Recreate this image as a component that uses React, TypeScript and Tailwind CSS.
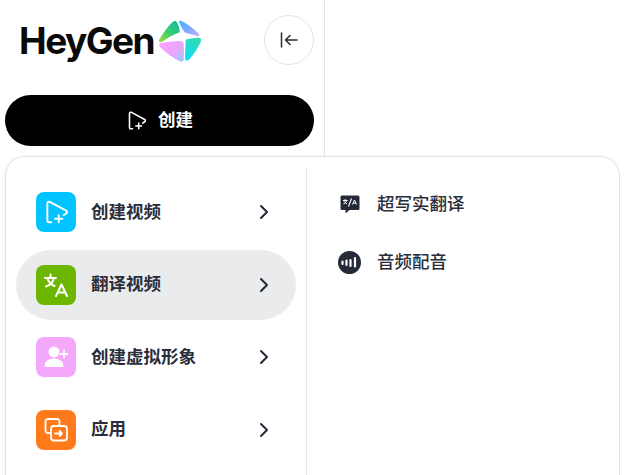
import type { ReactNode } from 'react';
import { ChevronRight } from 'lucide-react';

const cjk = "font-['Inter','Noto_Sans_CJK_SC',sans-serif]";

function LogoMark() {
  return (
    <svg width="44" height="42" viewBox="24 27 132 126" fill="none">
      <defs>
        <linearGradient id="g1" x1="35" y1="95" x2="85" y2="35" gradientUnits="userSpaceOnUse">
          <stop stopColor="#9bd84a" />
          <stop offset="0.5" stopColor="#35cf72" />
          <stop offset="1" stopColor="#12b9a8" />
        </linearGradient>
        <linearGradient id="g2" x1="90" y1="30" x2="148" y2="75" gradientUnits="userSpaceOnUse">
          <stop stopColor="#3db4ff" />
          <stop offset="1" stopColor="#c9a2ff" />
        </linearGradient>
        <linearGradient id="g3" x1="45" y1="100" x2="100" y2="150" gradientUnits="userSpaceOnUse">
          <stop stopColor="#f7a3ff" />
          <stop offset="0.55" stopColor="#e5a8fb" />
          <stop offset="1" stopColor="#8fc8ff" />
        </linearGradient>
        <linearGradient id="g4" x1="135" y1="80" x2="110" y2="150" gradientUnits="userSpaceOnUse">
          <stop stopColor="#2fdcb0" />
          <stop offset="1" stopColor="#0fdcff" />
        </linearGradient>
      </defs>
      <path d="M27 87C38 68 52 47 69 32c4-3 9-3 11 1 5 8 8 18 9 26 0 3-1 5-4 6-16 6-32 15-48 27-6 4-13 0-10-5Z" fill="url(#g1)" />
      <path d="M88 30c1-2 3-2 5-1 20 9 38 23 53 39 4 4 3 8-2 7-12-3-24-6-35-9-4-1-6-3-8-6-5-8-10-17-13-26-1-2-1-3 0-4Z" fill="url(#g2)" />
      <path d="M33 96c18-3 38-6 58-6 7 0 10 3 10 9 1 16 1 31 0 46 0 7-6 9-12 6-20-10-39-24-55-39-7-6-8-14-1-16Z" fill="url(#g3)" />
      <path d="M107 92c0-5 2-7 7-8 11-2 22-4 32-4 7 0 9 7 6 13-9 19-21 37-34 52-5 6-13 5-13-3 0-16 1-33 2-50Z" fill="url(#g4)" />
    </svg>
  );
}

function PlayPlus({ size, color }: { size: number; color: string }) {
  return (
    <svg width={size} height={size} viewBox="0 0 24 24" fill="none" stroke={color} strokeWidth="1.8" strokeLinecap="round" strokeLinejoin="round">
      <path d="M7.500 21.500H5.600C4.700 21.500 4 20.800 4 19.900V4C4 2.800 5.300 2.100 6.300 2.700L21.400 10.800c1 .6 1 2 0 2.600L19 15" />
      <path d="M14.500 15v6.500M11.200 18.200h6.600" />
    </svg>
  );
}

function TranslateIcon() {
  return (
    <svg width="26" height="26" viewBox="0 0 26 26" fill="none" stroke="#fff" strokeWidth="2" strokeLinecap="round" strokeLinejoin="round">
      <path d="M2 6h11M7.500 2.500V6M11 6c-.8 4-3.600 7-8 8.500M4.500 6.500c1 3.500 3.500 6 7 7.500" />
      <path d="M13 24 18.500 12.500 24 24M14.800 20.500h7.400" />
    </svg>
  );
}

function PersonPlus() {
  return (
    <svg width="26" height="26" viewBox="0 0 26 26" fill="#fff">
      <circle cx="11" cy="8" r="5.500" />
      <path d="M1.500 22c0-4.500 4-7.500 9.500-7.500s9.500 3 9.500 7.500c0 .6-.4 1-1 1h-17c-.6 0-1-.4-1-1Z" />
      <path d="M21 6.500v7M17.500 10h7" stroke="#fff" strokeWidth="1.800" strokeLinecap="round" />
    </svg>
  );
}

function AppsIcon() {
  return (
    <svg width="24" height="24" viewBox="0 0 24 24" fill="none" stroke="#fff" strokeWidth="1.800" strokeLinecap="round" strokeLinejoin="round">
      <path d="M6 15H4a2.500 2.500 0 0 1-2.500-2.500V3.500A2.500 2.500 0 0 1 4 1h9a2.500 2.500 0 0 1 2.500 2.500V8" />
      <rect x="7" y="8" width="16" height="14.500" rx="3" />
      <path d="M11 15.500h7M15.500 13 18 15.500 15.500 18" />
    </svg>
  );
}

function BubbleIcon() {
  return (
    <svg width="20" height="19" viewBox="0 0 20 19" fill="#252a38">
      <path d="M2 .5h16A1.500 1.500 0 0 1 19.500 2v11.500A1.500 1.500 0 0 1 18 15H9.500L5.500 18.500V15H2A1.500 1.500 0 0 1 .5 13.500V2A1.500 1.500 0 0 1 2 .5Z" />
      <path d="M8.500 11.500 11.500 3.500" stroke="#fff" strokeWidth="1.100" />
      <path d="M3 5.500h4.500M5.200 4v1.500M6.600 5.800c-.4 1.500-1.400 2.400-3.100 3M4 6.200c.6 1.100 1.500 2 2.900 2.600M12.500 9.500 14.500 5l2 4.500M13.200 8.200h2.600" stroke="#fff" strokeWidth="1" fill="none" />
    </svg>
  );
}

function AudioIcon() {
  return (
    <svg width="23" height="23" viewBox="0 0 23 23">
      <circle cx="11.500" cy="11.500" r="11.500" fill="#252a38" />
      <path d="M4.500 10.500v2.500M8.500 9.500v4.500M12.500 9v6M17 7v8.500" stroke="#fff" strokeWidth="2.200" strokeLinecap="round" />
    </svg>
  );
}

function MenuRow({ icon, bg, label, active }: { icon: ReactNode; bg: string; label: string; active?: boolean }) {
  return (
    <div className={`flex h-[70px] items-center rounded-[35px] pl-5 pr-5 ${active ? 'bg-[#eaebed]' : ''}`}>
      <div className={`flex h-10 w-10 shrink-0 items-center justify-center rounded-lg ${bg}`}>{icon}</div>
      <span className="ml-[15px] flex-1 text-[17.500px] font-bold text-[#2a2e3b]">{label}</span>
      <ChevronRight size={24} strokeWidth={2} className="text-[#252a38]" />
    </div>
  );
}

export default function App() {
  return (
    <div className={`h-[475px] w-[624px] overflow-hidden bg-white ${cjk}`}>
      <div className="flex h-[156px] w-[325px] flex-col border-r border-[#e4e5e9] pl-[5px] pr-[10px]">
        <div className="flex h-[95px] items-start">
          <div className="ml-[14px] mt-[20px] flex items-center">
            <span className="font-['Inter',sans-serif] text-[37px] font-bold leading-[42px] tracking-[-1.500px] text-[#0a0a0a]">HeyGen</span>
            <div className="ml-[4px]"><LogoMark /></div>
          </div>
          <button className="ml-auto mt-[15px] flex h-[50px] w-[50px] items-center justify-center rounded-full border border-[#e4e5e9] bg-white">
            <svg width="20" height="20" viewBox="0 0 20 20" fill="none" stroke="#252a38" strokeWidth="1.500" strokeLinecap="round" strokeLinejoin="round">
              <path d="M2.500 3v14M18 10H6.500M11 5.500 6.500 10l4.500 4.500" />
            </svg>
          </button>
        </div>
        <button className="flex h-[51px] w-full items-center justify-center gap-[11px] rounded-full bg-black text-[17.500px] font-bold text-white">
          <PlayPlus size={21} color="#fff" />
          <span>创建</span>
        </button>
      </div>

      <div className="ml-[5px] flex h-[340px] w-[615px] rounded-t-[20px] border border-b-0 border-[#e4e5e9] pt-[10px] shadow-[-1px_0_3px_rgba(0,0,0,0.06)]">
        <div className="w-[301px] border-r border-[#e4e5e9] pl-[10px] pr-[10px]">
          <div className="flex flex-col gap-[2.500px] pt-[10px]">
            <MenuRow bg="bg-[#00c3ff]" label="创建视频" icon={<PlayPlus size={26} color="#fff" />} />
            <MenuRow bg="bg-[#6db600]" label="翻译视频" icon={<TranslateIcon />} active />
            <MenuRow bg="bg-[#f3a8fc]" label="创建虚拟形象" icon={<PersonPlus />} />
            <MenuRow bg="bg-[#ff7a1a]" label="应用" icon={<AppsIcon />} />
          </div>
        </div>
        <div className="flex flex-col pl-[31px] pt-[8px] text-[17.500px] font-medium text-[#2a2e3b]">
          <div className="flex h-[58px] items-center gap-[16px]">
            <div className="flex w-[23px] justify-center"><BubbleIcon /></div>
            <span>超写实翻译</span>
          </div>
          <div className="flex h-[58px] items-center gap-[16px]">
            <AudioIcon />
            <span>音频配音</span>
          </div>
        </div>
      </div>
    </div>
  );
}
